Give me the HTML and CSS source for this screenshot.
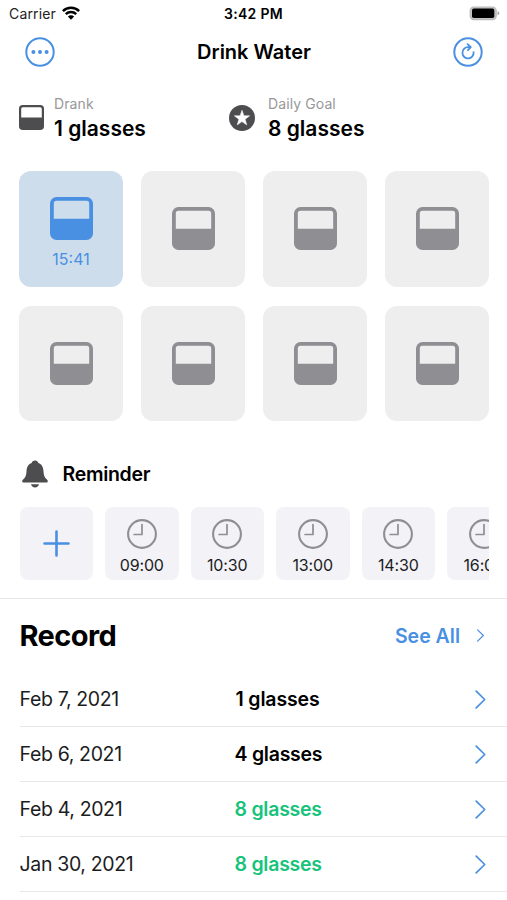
FILE: index.html
```html
<!DOCTYPE html>
<html lang="en">
<head>
<meta charset="utf-8">
<title>Drink Water</title>
<link rel="stylesheet" href="styles.css">
</head>
<body>
<svg class="sprite" aria-hidden="true">
  <symbol id="glass" viewBox="0 0 43 43"><path fill="currentColor" fill-rule="evenodd" d="M6.500 0h30A6.500 6.500 0 0 1 43 6.500v30a6.500 6.500 0 0 1-6.500 6.500h-30A6.500 6.500 0 0 1 0 36.500v-30A6.500 6.500 0 0 1 6.500 0ZM6.500 3.800A2.700 2.700 0 0 0 3.800 6.500V21.700h35.400V6.500a2.700 2.700 0 0 0-2.700-2.700Z"/></symbol>
  <symbol id="clock" viewBox="0 0 30 30"><circle cx="15" cy="15" r="13.900" fill="none" stroke="currentColor" stroke-width="2.100"/><path d="M15 5.500V15.500H7.100" fill="none" stroke="currentColor" stroke-width="1.700" stroke-linecap="round" stroke-linejoin="round"/></symbol>
  <symbol id="chevron" viewBox="0 0 11 19"><path d="M1.200 1.200 9.700 9.500 1.200 17.800" fill="none" stroke="currentColor" stroke-width="1.700" stroke-linecap="round" stroke-linejoin="round"/></symbol>
</svg>
<main class="app">
  <header class="status">
    <div class="status-left"><span class="carrier">Carrier</span>
      <svg class="wifi" viewBox="0 0 18 14"><g fill="none" stroke="#000" stroke-width="2.500"><path d="M.9 5.100a11.500 11.500 0 0 1 16.200 0"/><path d="M3.800 8.200a7.400 7.400 0 0 1 10.400 0"/></g><path d="M9 13.700 5.900 10.500a4.400 4.400 0 0 1 6.200 0Z"/></svg>
    </div>
    <span class="time">3:42 PM</span>
    <svg class="battery" viewBox="0 0 31 15"><rect x="1.200" y="1" width="26" height="12.600" rx="3.600" fill="#c4c4c4" stroke="#b9b9b9" stroke-width="1.200"/><path d="M28.500 5v4.600q1.800-.8 1.800-2.300T28.500 5Z" fill="#a5a5a5"/><rect x="3" y="2.600" width="22.300" height="9.400" rx="1.800"/></svg>
  </header>
  <nav class="nav">
    <svg class="nav-icon" viewBox="0 0 30 30"><circle cx="15" cy="15" r="13.700" fill="none" stroke="currentColor" stroke-width="2"/><g fill="currentColor"><circle cx="8.400" cy="15" r="2"/><circle cx="15" cy="15" r="2"/><circle cx="21.600" cy="15" r="2"/></g></svg>
    <h1 class="title">Drink Water</h1>
    <svg class="nav-icon" viewBox="0 0 30 30"><circle cx="15" cy="15" r="13.700" fill="none" stroke="currentColor" stroke-width="2"/><path d="M20.600 15.200A5.600 5.600 0 1 1 15 10.200h2.600M14.600 7.200 17.800 10.200 14.900 13.200" fill="none" stroke="currentColor" stroke-width="1.800" stroke-linecap="round" stroke-linejoin="round"/></svg>
  </nav>
  <section class="stats">
    <div class="stat"><svg class="stat-glass"><use href="#glass"/></svg><div><div class="label">Drank</div><div class="value">1 glasses</div></div></div>
    <div class="stat"><svg class="stat-star" viewBox="0 0 26 26"><circle cx="13" cy="13" r="13" fill="#4d4d4f"/><path d="M13 5.200 14.900 10.700 20.700 10.800 16.100 14.300 17.800 19.900 13 16.600 8.200 19.900 9.900 14.300 5.300 10.800 11.100 10.700Z" fill="#fff" stroke="#fff" stroke-width=".5" stroke-linejoin="round"/></svg><div><div class="label">Daily Goal</div><div class="value">8 glasses</div></div></div>
  </section>
  <section class="glasses">
    <div class="glass full"><svg><use href="#glass"/></svg><span>15:41</span></div>
    <div class="glass"><svg><use href="#glass"/></svg></div>
    <div class="glass"><svg><use href="#glass"/></svg></div>
    <div class="glass"><svg><use href="#glass"/></svg></div>
    <div class="glass"><svg><use href="#glass"/></svg></div>
    <div class="glass"><svg><use href="#glass"/></svg></div>
    <div class="glass"><svg><use href="#glass"/></svg></div>
    <div class="glass"><svg><use href="#glass"/></svg></div>
  </section>
  <div class="reminder-head">
    <svg class="bell" viewBox="0 0 26 28" fill="#4d4d4f"><path d="M13 .5c1.900 0 3 1 3.300 2.400 3.700 1.200 5 4.400 5.200 8.300.2 4.100 1 6.100 2.900 7.800 1.200 1.100 1.400 1.600 1.400 2.200 0 .8-.6 1.300-1.600 1.300H1.800c-1 0-1.600-.5-1.600-1.300 0-.6.2-1.100 1.400-2.200 1.900-1.700 2.700-3.700 2.900-7.800.2-3.900 1.500-7.100 5.200-8.300C10 1.500 11.100.5 13 .5Z"/><path d="M9 24.200h8c-.4 2-2 3.200-4 3.200s-3.600-1.200-4-3.200Z"/></svg>
    <h2>Reminder</h2>
  </div>
  <section class="reminders">
    <div class="reminder add"><svg viewBox="0 0 27 27"><path d="M13.500 1.500v24M1.500 13.500h24" fill="none" stroke="currentColor" stroke-width="2.600" stroke-linecap="round"/></svg></div>
    <div class="reminder"><svg><use href="#clock"/></svg><span>09:00</span></div>
    <div class="reminder"><svg><use href="#clock"/></svg><span>10:30</span></div>
    <div class="reminder"><svg><use href="#clock"/></svg><span>13:00</span></div>
    <div class="reminder"><svg><use href="#clock"/></svg><span>14:30</span></div>
    <div class="reminder"><svg><use href="#clock"/></svg><span>16:00</span></div>
  </section>
  <section class="record">
    <div class="record-head"><h2>Record</h2><div class="see-all"><span>See All</span><svg><use href="#chevron"/></svg></div></div>
    <div class="row"><span class="date">Feb 7, 2021</span><span class="count one">1 glasses</span><svg><use href="#chevron"/></svg></div>
    <div class="row"><span class="date">Feb 6, 2021</span><span class="count">4 glasses</span><svg><use href="#chevron"/></svg></div>
    <div class="row"><span class="date">Feb 4, 2021</span><span class="count done">8 glasses</span><svg><use href="#chevron"/></svg></div>
    <div class="row"><span class="date">Jan 30, 2021</span><span class="count done">8 glasses</span><svg><use href="#chevron"/></svg></div>
  </section>
</main>
</body>
</html>
```
FILE: styles.css
```css
* { box-sizing: border-box; }
body { margin: 0; background: #fff; color: #000; font-family: Inter, "Liberation Sans", sans-serif; }
h1, h2 { margin: 0; font-weight: 600; }
svg { display: block; flex: none; }
.sprite { width: 0; height: 0; position: absolute; }
.app { width: 507px; height: 900px; overflow: hidden; display: flex; flex-direction: column; }

.status { height: 27px; padding: 0 7px 0 9px; display: grid; grid-template-columns: 1fr auto 1fr; align-items: center; font-size: 14px; }
.status-left { display: flex; align-items: center; gap: 6px; }
.status-left svg { margin-bottom: 1px; }
.carrier { letter-spacing: .15px; color: #222; }
.wifi { width: 18px; height: 14px; }
.time { font-weight: 600; letter-spacing: .3px; margin-right: 2px; }
.battery { width: 31px; height: 15px; justify-self: end; }

.nav { height: 50px; padding: 0 24px 0 25px; display: flex; align-items: center; justify-content: space-between; }
.nav-icon { width: 30px; height: 30px; color: #4a90e2; }
.title { font-size: 20px; }

.stats { height: 94px; padding: 18px 0 0 19px; display: grid; grid-template-columns: 210px 1fr; align-items: start; }
.stat { display: flex; align-items: center; gap: 10px; }
.stat-glass { width: 25px; height: 25px; margin-bottom: 5px; color: #4d4d4f; }
.stat-star { width: 26px; height: 26px; margin-bottom: 3px; }
.stat:last-child { gap: 13px; }
.label { font-size: 14px; line-height: 18px; letter-spacing: .1px; color: #98989a; }
.value { font-size: 21px; line-height: 31px; font-weight: 600; }

.glasses { padding: 0 18px 0 19px; display: grid; grid-template-columns: repeat(4, 104px); column-gap: 18px; grid-auto-rows: 115.500px; row-gap: 19px; }
.glass { border-radius: 12px; background: #eee; color: #8e8e93; display: flex; flex-direction: column; align-items: center; justify-content: center; }
.glass svg { width: 43px; height: 43px; }
.full { padding-top: 9px; background: #cdddeb; color: #4a90e2; gap: 10px; font-size: 16px; line-height: 19px; }

.reminder-head { height: 86px; padding: 19px 0 0 22px; display: flex; align-items: center; gap: 14.500px; }
.reminder-head h2 { font-size: 19.500px; letter-spacing: -.3px; }
.bell { width: 26px; height: 28px; }
.reminders { margin: 0 18px 0 19.500px; height: 73px; display: flex; gap: 12px; overflow: hidden; }
.reminder { flex: 0 0 73.500px; padding-top: 12px; border-radius: 8px; background: #f2f2f7; display: flex; flex-direction: column; align-items: center; color: #8e8e93; }
.reminder svg { width: 30px; height: 30px; }
.reminder span { margin-top: 7px; font-size: 16px; line-height: 19px; letter-spacing: -.15px; color: #1c1c1e; }
.reminder.add { padding: 0; justify-content: center; color: #4a90e2; }
.add svg { width: 27px; height: 27px; }

.record { margin-top: 18px; border-top: 1px solid #e8e8e9; padding-left: 19.500px; }
.record-head { height: 73px; padding-right: 22px; display: flex; align-items: center; justify-content: space-between; }
.record-head h2 { font-size: 29px; font-weight: 700; letter-spacing: -.6px; }
.see-all { display: flex; align-items: center; gap: 16px; color: #4a90e2; font-size: 19.500px; font-weight: 600; }
.see-all svg { width: 9px; height: 13px; }
.row { height: 55px; border-bottom: 1px solid #e8e8ea; padding-right: 21px; display: grid; grid-template-columns: 215px 1fr 11px; align-items: center; font-size: 19.500px; }
.row svg { width: 11px; height: 19px; color: #4a90e2; }
.date { letter-spacing: -.35px; color: #1c1c1e; }
.count { font-weight: 600; letter-spacing: -.25px; }
.one { padding-left: 1px; letter-spacing: -.15px; }
.done { color: #17c37b; }
```
